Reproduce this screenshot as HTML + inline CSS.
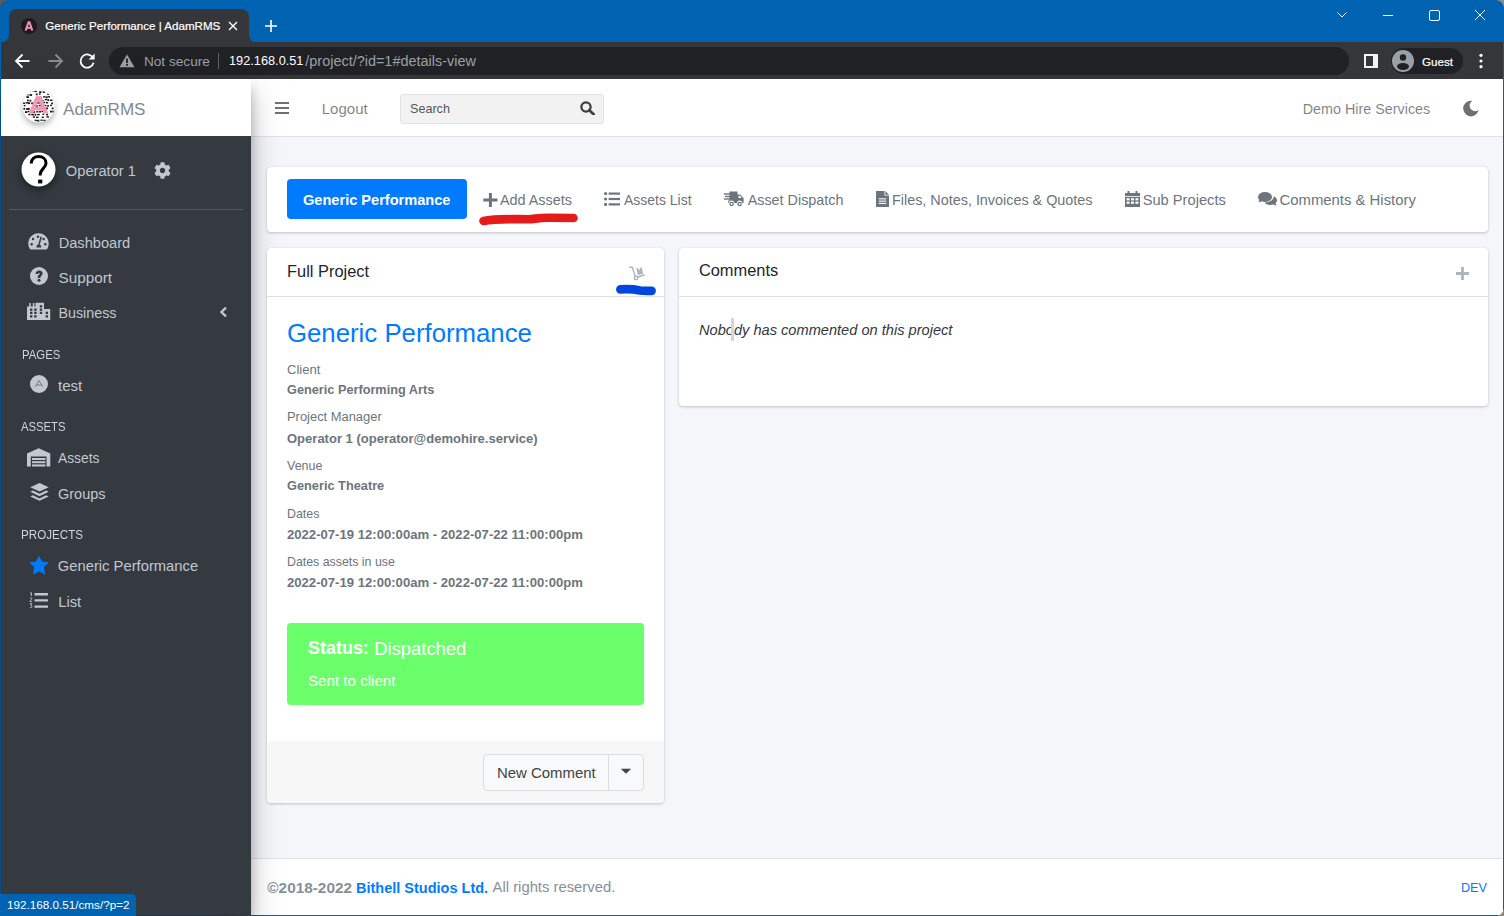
<!DOCTYPE html>
<html><head><meta charset="utf-8">
<style>
*{box-sizing:border-box;margin:0;padding:0}
html,body{width:1504px;height:916px;overflow:hidden;font-family:"Liberation Sans",sans-serif;background:#0063b1}
.a{position:absolute}
.t{position:absolute;white-space:nowrap}
#win{position:absolute;left:0;top:0;width:1504px;height:916px;background:#0063b1;overflow:hidden}
#tab{position:absolute;left:9px;top:9px;width:240px;height:34px;background:#35363a;border-radius:8px 8px 0 0}
#tab:before,#tab:after{content:"";position:absolute;bottom:0;width:8px;height:8px}
#tab:before{left:-8px;background:radial-gradient(circle at 0 0,transparent 7.5px,#35363a 8px)}
#tab:after{right:-8px;background:radial-gradient(circle at 100% 0,transparent 7.5px,#35363a 8px)}
#toolbar{position:absolute;left:1px;top:42px;width:1502px;height:37px;background:#35363a}
#omni{position:absolute;left:109px;top:47px;width:1240px;height:28px;background:#202124;border-radius:14px}
#content{position:absolute;left:1px;top:79px;width:1502px;height:836px;background:#f4f6f9}
#sidebar{position:absolute;left:1px;top:79px;width:250px;height:836px;background:#343a40;box-shadow:0 14px 28px rgba(0,0,0,.25),0 10px 10px rgba(0,0,0,.22)}
#brand{position:absolute;left:1px;top:79px;width:250px;height:57px;background:#fff}
#navbar{position:absolute;left:251px;top:79px;width:1252px;height:58px;background:#fff;border-bottom:1px solid #dee2e6}
#footer{position:absolute;left:251px;top:858px;width:1252px;height:57px;background:#fff;border-top:1px solid #dee2e6}
.card{position:absolute;background:#fff;border-radius:4px;box-shadow:0 0 1px rgba(0,0,0,.125),0 1px 3px rgba(0,0,0,.2)}
</style></head><body>
<div id="win">
<div id="tab"></div>
<svg class="a" style="left:21px;top:18px" width="16" height="16" viewBox="0 0 16 16">
<circle cx="8" cy="8" r="8" fill="#1b1b1d"/><path d="M3.6 12.6L6.8 3.3h2.4l3.2 9.3h-2.3l-.6-1.9H6.5l-.6 1.9z M7 8.9h2L8 5.8z" fill="#f48fb1"/></svg>
<div class="t" style="left:45.3px;top:20.18px;font-size:11.6px;line-height:11.6px;color:#fff;font-weight:normal;font-style:normal;-webkit-text-stroke:0.2px #fff;">Generic Performance | AdamRMS</div>
<svg class="a" style="left:228px;top:21px" width="10" height="10" viewBox="0 0 10 10"><path d="M1 1L9 9M9 1L1 9" stroke="#fff" stroke-width="1.4"/></svg>
<svg class="a" style="left:264px;top:19px" width="14" height="14" viewBox="0 0 14 14"><path d="M7 1V13M1 7H13" stroke="#fff" stroke-width="1.6"/></svg>
<svg class="a" style="left:1330px;top:5px" width="170" height="22" viewBox="0 0 170 22">
<path d="M7.5 7.5L12 12L16.5 7.5" stroke="#fff" stroke-width="1" fill="none"/>
<path d="M53 10.5H63" stroke="#fff" stroke-width="1"/>
<rect x="99.5" y="5.5" width="10" height="10" rx="1.5" stroke="#fff" stroke-width="1" fill="none"/>
<path d="M145 5L155 15M155 5L145 15" stroke="#fff" stroke-width="1"/>
</svg>
<div id="toolbar"></div>
<svg class="a" style="left:12px;top:50px" width="90" height="22" viewBox="0 0 90 22">
<path d="M17.5 11H4.5M10.5 4.5L4 11L10.5 17.5" stroke="#fff" stroke-width="1.8" fill="none"/>
<path d="M36.5 11H49.5M43.5 4.5L50 11L43.5 17.5" stroke="#8a8b8d" stroke-width="1.8" fill="none"/>
<path d="M81.2 8.2A6.6 6.6 0 1 0 81.6 12.8" stroke="#fff" stroke-width="1.8" fill="none"/>
<path d="M82.6 3.6V9.6H76.6Z" fill="#fff"/>
</svg>
<div id="omni"></div>
<svg class="a" style="left:119px;top:54px" width="16" height="14" viewBox="0 0 16 14"><path d="M8 0.5L15.5 13.2H0.5Z" fill="#9aa0a6"/><rect x="7.1" y="4.5" width="1.8" height="4.6" fill="#202124"/><rect x="7.1" y="10" width="1.8" height="1.8" fill="#202124"/></svg>
<div class="t" style="left:143.9px;top:54.65px;font-size:13.65px;line-height:13.65px;color:#9aa0a6;font-weight:normal;font-style:normal;">Not secure</div>
<div class="a" style="left:218px;top:53px;width:1px;height:16px;background:#5f6368"></div>
<div class="t" style="left:229px;top:55.40px;font-size:12.76px;line-height:12.76px;color:#fff;font-weight:normal;font-style:normal;">192.168.0.51</div>
<div class="t" style="left:305.3px;top:53.98px;font-size:14.44px;line-height:14.44px;color:#9aa0a6;font-weight:normal;font-style:normal;">/project/?id=1#details-view</div>
<svg class="a" style="left:1363px;top:53px" width="16" height="16" viewBox="0 0 16 16"><rect x="1" y="1" width="14" height="14" fill="#f1f3f4"/><rect x="3" y="3" width="7" height="10" fill="#35363a"/></svg>
<div class="a" style="left:1391px;top:48px;width:72px;height:26px;border-radius:13px;background:#202124"></div>
<svg class="a" style="left:1392px;top:50px" width="22" height="22" viewBox="0 0 22 22"><circle cx="11" cy="11" r="11" fill="#9aa0a6"/><circle cx="11" cy="7.5" r="3.2" fill="#202124"/><ellipse cx="11" cy="16.5" rx="6" ry="3.4" fill="#202124"/></svg>
<div class="t" style="left:1422px;top:55.58px;font-size:11.6px;line-height:11.6px;color:#fff;font-weight:normal;font-style:normal;-webkit-text-stroke:0.2px #fff;">Guest</div>
<svg class="a" style="left:1478px;top:53px" width="6" height="16" viewBox="0 0 6 16"><circle cx="3" cy="2.3" r="1.6" fill="#fff"/><circle cx="3" cy="8" r="1.6" fill="#fff"/><circle cx="3" cy="13.7" r="1.6" fill="#fff"/></svg>
<div id="content"></div>
<div id="navbar"></div>
<svg class="a" style="left:275px;top:102px" width="14" height="12" viewBox="0 0 14 12"><rect x="0" y="0" width="14" height="2" fill="#707070"/><rect x="0" y="5" width="14" height="2" fill="#707070"/><rect x="0" y="10" width="14" height="2" fill="#707070"/></svg>
<div class="t" style="left:321.7px;top:101.17px;font-size:15.04px;line-height:15.04px;color:rgba(0,0,0,.5);font-weight:normal;font-style:normal;">Logout</div>
<div class="a" style="left:400px;top:94px;width:204px;height:30px;background:#f2f2f2;border:1px solid #e2e2e2;border-radius:3px"></div>
<div class="t" style="left:410px;top:102.63px;font-size:12.6px;line-height:12.6px;color:#555;font-weight:normal;font-style:normal;">Search</div>
<svg class="a" style="left:580px;top:101px" width="15" height="14" viewBox="0 0 15 14"><circle cx="6" cy="6" r="4.6" stroke="#3f3f3f" stroke-width="2.3" fill="none"/><path d="M9.3 9.3L13.6 13.2" stroke="#3f3f3f" stroke-width="2.8" stroke-linecap="round"/></svg>
<div class="t" style="left:1302.7px;top:101.65px;font-size:14.35px;line-height:14.35px;color:rgba(0,0,0,.5);font-weight:normal;font-style:normal;">Demo Hire Services</div>
<svg class="a" style="left:1463px;top:99.5px" width="16" height="17" viewBox="0 0 16 17"><defs><mask id="mm"><rect width="16" height="17" fill="#fff"/><circle cx="12.2" cy="5.6" r="5.6" fill="#000"/></mask></defs><circle cx="8" cy="8.6" r="7.8" fill="#6f6f6f" mask="url(#mm)"/></svg>
<div id="footer"></div>
<div class="t" style="left:267.3px;top:879.81px;font-size:15.35px;line-height:15.35px;color:#869099;font-weight:bold;font-style:normal;">©2018-2022</div>
<div class="t" style="left:356px;top:880.52px;font-size:14.51px;line-height:14.51px;color:#007bff;font-weight:bold;font-style:normal;">Bithell Studios Ltd.</div>
<div class="t" style="left:492.6px;top:880.25px;font-size:14.82px;line-height:14.82px;color:#869099;font-weight:normal;font-style:normal;">All rights reserved.</div>
<div class="t" style="left:1461px;top:882.10px;font-size:12.64px;line-height:12.64px;color:#007bff;font-weight:normal;font-style:normal;">DEV</div>
<div id="sidebar"></div>
<div id="brand"></div>
<svg class="a" style="left:22px;top:90px;filter:drop-shadow(0 3px 3px rgba(0,0,0,.3))" width="33" height="33" viewBox="0 0 33 33"><defs><clipPath id="cc"><circle cx="16.5" cy="16.5" r="16"/></clipPath></defs><circle cx="16.5" cy="16.5" r="16" fill="#fff"/><g clip-path="url(#cc)"><rect x="9.8" y="0.4" width="1.8" height="1.4" fill="#1a1a1a"/><rect x="12.3" y="0.7" width="2.6" height="1.4" fill="#1a1a1a"/><rect x="17.2" y="1.2" width="2.2" height="1.8" fill="#1a1a1a"/><rect x="20.7" y="1.1" width="2.6" height="1.8" fill="#1a1a1a"/><rect x="4.9" y="4.1" width="1.8" height="1.4" fill="#1a1a1a"/><rect x="7.5" y="4.1" width="2.6" height="1.8" fill="#1a1a1a"/><rect x="13.8" y="3.5" width="1.8" height="1.8" fill="#1a1a1a"/><rect x="16.8" y="3.3" width="1.8" height="1.4" fill="#1a1a1a"/><rect x="25.3" y="3.3" width="1.8" height="1.8" fill="#1a1a1a"/><rect x="4.3" y="6.2" width="2.6" height="1.8" fill="#1a1a1a"/><rect x="17.7" y="6.6" width="1.8" height="1.4" fill="#1a1a1a"/><rect x="21.1" y="6.2" width="2.6" height="1.4" fill="#1a1a1a"/><rect x="23.9" y="6.4" width="1.8" height="1.8" fill="#1a1a1a"/><rect x="25.8" y="6.1" width="2.2" height="1.4" fill="#1a1a1a"/><rect x="5.0" y="9.5" width="1.8" height="1.8" fill="#1a1a1a"/><rect x="7.5" y="9.8" width="1.8" height="1.8" fill="#1a1a1a"/><rect x="13.3" y="9.4" width="1.8" height="1.8" fill="#1a1a1a"/><rect x="15.9" y="9.3" width="2.6" height="1.4" fill="#1a1a1a"/><rect x="19.4" y="9.8" width="2.2" height="1.8" fill="#1a1a1a"/><rect x="22.8" y="8.9" width="2.2" height="1.4" fill="#1a1a1a"/><rect x="25.3" y="9.2" width="1.8" height="1.8" fill="#1a1a1a"/><rect x="27.9" y="9.6" width="2.6" height="1.4" fill="#1a1a1a"/><rect x="0.7" y="12.5" width="2.6" height="1.4" fill="#1a1a1a"/><rect x="3.8" y="12.1" width="2.6" height="1.4" fill="#1a1a1a"/><rect x="5.9" y="12.3" width="2.2" height="1.8" fill="#1a1a1a"/><rect x="9.2" y="12.4" width="2.2" height="1.8" fill="#1a1a1a"/><rect x="12.7" y="11.8" width="1.8" height="1.8" fill="#1a1a1a"/><rect x="15.2" y="12.2" width="2.6" height="1.4" fill="#1a1a1a"/><rect x="17.9" y="12.3" width="2.2" height="1.4" fill="#1a1a1a"/><rect x="20.6" y="11.8" width="2.6" height="1.4" fill="#1a1a1a"/><rect x="24.0" y="12.0" width="2.2" height="1.4" fill="#1a1a1a"/><rect x="29.2" y="12.5" width="1.8" height="1.8" fill="#1a1a1a"/><rect x="1.7" y="14.9" width="1.8" height="1.4" fill="#1a1a1a"/><rect x="10.6" y="15.2" width="2.2" height="1.8" fill="#1a1a1a"/><rect x="13.3" y="15.4" width="2.6" height="1.4" fill="#1a1a1a"/><rect x="16.7" y="14.8" width="2.6" height="1.4" fill="#1a1a1a"/><rect x="22.5" y="14.8" width="1.8" height="1.4" fill="#1a1a1a"/><rect x="24.9" y="15.2" width="2.2" height="1.4" fill="#1a1a1a"/><rect x="28.1" y="14.7" width="1.8" height="1.4" fill="#1a1a1a"/><rect x="1.4" y="17.9" width="1.8" height="1.8" fill="#1a1a1a"/><rect x="4.1" y="18.1" width="2.2" height="1.8" fill="#1a1a1a"/><rect x="6.0" y="17.9" width="1.8" height="1.8" fill="#1a1a1a"/><rect x="9.4" y="18.1" width="2.2" height="1.8" fill="#1a1a1a"/><rect x="15.6" y="18.2" width="1.8" height="1.4" fill="#1a1a1a"/><rect x="20.5" y="18.4" width="2.2" height="1.4" fill="#1a1a1a"/><rect x="23.4" y="17.5" width="2.6" height="1.8" fill="#1a1a1a"/><rect x="29.7" y="17.5" width="1.8" height="1.8" fill="#1a1a1a"/><rect x="2.9" y="21.2" width="2.6" height="1.8" fill="#1a1a1a"/><rect x="5.7" y="20.7" width="1.8" height="1.4" fill="#1a1a1a"/><rect x="7.8" y="20.8" width="2.6" height="1.4" fill="#1a1a1a"/><rect x="10.8" y="21.1" width="2.2" height="1.8" fill="#1a1a1a"/><rect x="14.2" y="21.1" width="2.2" height="1.4" fill="#1a1a1a"/><rect x="17.1" y="20.8" width="1.8" height="1.8" fill="#1a1a1a"/><rect x="19.4" y="20.8" width="1.8" height="1.4" fill="#1a1a1a"/><rect x="22.2" y="20.7" width="2.6" height="1.4" fill="#1a1a1a"/><rect x="27.9" y="20.7" width="2.2" height="1.8" fill="#1a1a1a"/><rect x="30.3" y="20.7" width="2.2" height="1.8" fill="#1a1a1a"/><rect x="6.2" y="23.8" width="2.2" height="1.4" fill="#1a1a1a"/><rect x="9.3" y="23.7" width="2.6" height="1.8" fill="#1a1a1a"/><rect x="12.5" y="23.8" width="1.8" height="1.8" fill="#1a1a1a"/><rect x="15.2" y="23.9" width="2.6" height="1.4" fill="#1a1a1a"/><rect x="20.4" y="23.6" width="1.8" height="1.4" fill="#1a1a1a"/><rect x="24.2" y="23.7" width="1.8" height="1.8" fill="#1a1a1a"/><rect x="10.8" y="26.3" width="2.2" height="1.4" fill="#1a1a1a"/><rect x="13.9" y="26.6" width="2.6" height="1.4" fill="#1a1a1a"/><rect x="19.7" y="26.6" width="2.2" height="1.4" fill="#1a1a1a"/><rect x="24.5" y="26.2" width="2.6" height="1.4" fill="#1a1a1a"/><rect x="12.7" y="29.7" width="2.2" height="1.4" fill="#1a1a1a"/><rect x="15.1" y="29.8" width="2.2" height="1.8" fill="#1a1a1a"/><rect x="18.5" y="29.5" width="2.2" height="1.4" fill="#1a1a1a"/><rect x="21.3" y="29.7" width="2.2" height="1.4" fill="#1a1a1a"/></g><path d="M6.6 23.5L13.8 6.3H19.2L26.4 23.5H21.8L20.6 20.4H12.4L11.2 23.5Z M13.9 16.8H19.1L16.5 10.2Z" fill="#f497b4"/></svg>
<div class="t" style="left:63px;top:100.55px;font-size:17.07px;line-height:17.07px;color:#83898f;font-weight:normal;font-style:normal;">AdamRMS</div>
<svg class="a" style="left:21px;top:152px;filter:drop-shadow(0 3px 4px rgba(0,0,0,.5))" width="35" height="35" viewBox="0 0 35 35"><circle cx="17.5" cy="17.5" r="17" fill="#fff"/>
<path d="M10.2 11.6C10.2 7.2 13.3 4.6 17.6 4.6C21.9 4.6 25 7.2 25 11.2C25 16.2 19.2 16.6 19.2 22.6V23.6" stroke="#000" stroke-width="3" fill="none"/><rect x="17.1" y="27.6" width="4.2" height="3.8" fill="#000"/></svg>
<div class="t" style="left:65.8px;top:163.96px;font-size:14.69px;line-height:14.69px;color:#c2c7d0;font-weight:normal;font-style:normal;">Operator 1</div>
<svg class="a" style="left:154px;top:161.5px" width="17" height="17" viewBox="0 0 512 512"><path fill="#c2c7d0" d="M487.4 315.7l-42.6-24.6c4.3-23.2 4.3-47 0-70.2l42.6-24.6c4.9-2.8 7.1-8.6 5.5-14-11.100-35.600-30-67.800-54.700-94.600-3.800-4.100-10-5.100-14.800-2.300L380.800 110c-17.900-15.400-38.500-27.300-60.800-35.100V25.800c0-5.600-3.900-10.500-9.400-11.700-36.700-8.200-74.300-7.800-109.200 0-5.500 1.200-9.400 6.100-9.400 11.700V75c-22.200 7.900-42.800 19.800-60.800 35.100L88.700 85.500c-4.900-2.800-11-1.900-14.800 2.300-24.700 26.700-43.600 58.900-54.700 94.600-1.700 5.400.6 11.200 5.500 14L67.300 221c-4.300 23.200-4.300 47 0 70.200l-42.600 24.600c-4.900 2.800-7.100 8.600-5.500 14 11.100 35.600 30 67.800 54.700 94.600 3.800 4.100 10 5.100 14.800 2.300l42.600-24.600c17.900 15.400 38.500 27.300 60.800 35.100v49.200c0 5.600 3.900 10.500 9.400 11.700 36.700 8.200 74.300 7.800 109.200 0 5.500-1.200 9.400-6.100 9.400-11.700v-49.200c22.200-7.900 42.800-19.800 60.800-35.100l42.600 24.600c4.900 2.800 11 1.900 14.800-2.300 24.700-26.700 43.600-58.900 54.700-94.600 1.500-5.500-.7-11.300-5.600-14.100zM256 336c-44.100 0-80-35.900-80-80s35.900-80 80-80 80 35.900 80 80-35.900 80-80 80z"/></svg>
<div class="a" style="left:9px;top:209px;width:234px;height:1px;background:#4f5962"></div>
<svg class="a" style="left:28px;top:233px" width="21" height="17" viewBox="0 0 21 17">
<path d="M10.5 0.3C4.8 0.3 0.3 4.9 0.3 10.6C0.3 12.5 0.8 14.3 1.7 15.8C1.9 16.2 2.3 16.4 2.7 16.4H18.3C18.7 16.4 19.1 16.2 19.3 15.8C20.2 14.3 20.7 12.5 20.7 10.6C20.7 4.9 16.2 0.3 10.5 0.3Z" fill="#c2c7d0"/>
<circle cx="10" cy="3.7" r="1.2" fill="#343a40"/><circle cx="5" cy="6" r="1.2" fill="#343a40"/><circle cx="15.6" cy="6" r="1.2" fill="#343a40"/>
<circle cx="3.7" cy="11.3" r="1.2" fill="#343a40"/><circle cx="17.3" cy="11.3" r="1.2" fill="#343a40"/>
<path d="M13.2 3.8L11 11.5" stroke="#343a40" stroke-width="1.5"/><path d="M8.3 14.6C8.3 12.7 9.3 11.2 10.8 11.2C12.3 11.2 13.3 12.7 13.3 14.6Z" fill="#343a40"/>
</svg>
<div class="t" style="left:58.7px;top:235.72px;font-size:14.62px;line-height:14.62px;color:#c2c7d0;font-weight:normal;font-style:normal;">Dashboard</div>
<svg class="a" style="left:29.5px;top:267px" width="18" height="18" viewBox="0 0 18 18"><circle cx="9" cy="9" r="9" fill="#c2c7d0"/>
<path d="M5.6 7C5.6 4.9 7.1 3.5 9.1 3.5C11.1 3.5 12.6 4.8 12.6 6.6C12.6 8.7 10.4 9 10.4 10.5V11H7.7V10.2C7.7 7.8 9.9 7.6 9.9 6.7C9.9 6.2 9.6 5.9 9 5.9C8.4 5.9 8.1 6.3 8.1 7Z" fill="#343a40"/><circle cx="9.05" cy="13.3" r="1.5" fill="#343a40"/></svg>
<div class="t" style="left:58.5px;top:269.97px;font-size:15.28px;line-height:15.28px;color:#c2c7d0;font-weight:normal;font-style:normal;">Support</div>
<svg class="a" style="left:27px;top:302px" width="24" height="18" viewBox="0 0 24 18">
<path d="M0 4.5H2.2V1H3.8V4.5H5.8V1H7.4V4.5H8.5V0.8H17V7H23.2V18H0Z" fill="#c2c7d0"/>
<g fill="#343a40"><rect x="3" y="6.5" width="2.4" height="2.3"/><rect x="7.2" y="6.5" width="2.4" height="2.3"/><rect x="12.8" y="3.2" width="2.4" height="2.3"/><rect x="12.8" y="6.5" width="2.4" height="2.3"/>
<rect x="3" y="9.7" width="2.4" height="2.3"/><rect x="7.2" y="9.7" width="2.4" height="2.3"/><rect x="12.8" y="9.7" width="2.4" height="2.3"/><rect x="18.6" y="9.7" width="2.4" height="2.3"/>
<rect x="3" y="13.2" width="2.4" height="2.3"/><rect x="7.2" y="13.2" width="2.4" height="2.3"/><rect x="18.6" y="13.2" width="2.4" height="2.3"/></g></svg>
<div class="t" style="left:58.5px;top:306.20px;font-size:14.29px;line-height:14.29px;color:#c2c7d0;font-weight:normal;font-style:normal;">Business</div>
<svg class="a" style="left:219px;top:306px" width="9" height="12" viewBox="0 0 9 12"><path d="M7 1.5L2.5 6L7 10.5" stroke="#c2c7d0" stroke-width="2.4" fill="none"/></svg>
<div class="t" style="left:21.5px;top:348.58px;font-size:12.9px;line-height:12.9px;color:#d0d4db;font-weight:normal;font-style:normal;transform:scaleX(0.883);transform-origin:0 0;">PAGES</div>
<svg class="a" style="left:29.5px;top:375.3px" width="18" height="18" viewBox="0 0 18 18"><circle cx="9" cy="9" r="9" fill="#c2c7d0"/><path d="M5.2 11.8L9 5.6L12.8 11.8M6.6 10H11.4" stroke="#6c737c" stroke-width="0.9" fill="none"/></svg>
<div class="t" style="left:58px;top:378.29px;font-size:15.02px;line-height:15.02px;color:#c2c7d0;font-weight:normal;font-style:normal;">test</div>
<div class="t" style="left:21px;top:420.68px;font-size:12.9px;line-height:12.9px;color:#d0d4db;font-weight:normal;font-style:normal;transform:scaleX(0.874);transform-origin:0 0;">ASSETS</div>
<svg class="a" style="left:27px;top:448px" width="24" height="19" viewBox="0 0 24 19"><path d="M0 5.5L11.7 0.3L23.3 5.5V18.5H19.5V8.5H3.8V18.5H0Z" fill="#c2c7d0"/>
<rect x="5" y="10" width="13.4" height="2" fill="#c2c7d0"/><rect x="5" y="13.2" width="13.4" height="2" fill="#c2c7d0"/><rect x="5" y="16.4" width="13.4" height="2.1" fill="#c2c7d0"/></svg>
<div class="t" style="left:58px;top:452.32px;font-size:13.8px;line-height:13.8px;color:#c2c7d0;font-weight:normal;font-style:normal;">Assets</div>
<svg class="a" style="left:29.5px;top:483px" width="19" height="18" viewBox="0 0 19 18"><path d="M9.5 0L18.7 4.2L9.5 8.6L0.3 4.2Z" fill="#c2c7d0"/><path d="M2.8 7.6L9.5 10.8L16.2 7.6L18.7 8.8L9.5 13.2L0.3 8.8Z" fill="#c2c7d0"/><path d="M2.8 12.2L9.5 15.4L16.2 12.2L18.7 13.4L9.5 17.8L0.3 13.4Z" fill="#c2c7d0"/></svg>
<div class="t" style="left:58px;top:486.73px;font-size:14.49px;line-height:14.49px;color:#c2c7d0;font-weight:normal;font-style:normal;">Groups</div>
<div class="t" style="left:21.4px;top:529.08px;font-size:12.9px;line-height:12.9px;color:#d0d4db;font-weight:normal;font-style:normal;transform:scaleX(0.902);transform-origin:0 0;">PROJECTS</div>
<svg class="a" style="left:29px;top:555.5px" width="20" height="19" viewBox="0 0 20 19"><path d="M10 0.5L12.7 6.1L18.9 6.8L14.3 11L15.6 17.9L10 14.7L4.4 17.9L5.7 11L1.1 6.8L7.3 6.1Z" fill="#007bff" stroke="#007bff" stroke-width="1" stroke-linejoin="round"/></svg>
<div class="t" style="left:57.8px;top:559.40px;font-size:14.77px;line-height:14.77px;color:#c2c7d0;font-weight:normal;font-style:normal;">Generic Performance</div>
<svg class="a" style="left:29px;top:591.5px" width="20" height="17" viewBox="0 0 20 17">
<path d="M1.3 1.2L2.3 0.5V4" stroke="#c2c7d0" stroke-width="1" fill="none"/>
<path d="M0.9 6.2C1.5 5.5 3 5.7 2.8 6.8C2.6 7.7 0.9 8.6 0.9 9.4H3" stroke="#c2c7d0" stroke-width="0.9" fill="none"/>
<path d="M0.9 11.6H2.8L1.8 13C3.3 13 3.3 15.6 1.8 15.6C1.2 15.6 0.9 15.3 0.8 15" stroke="#c2c7d0" stroke-width="0.9" fill="none"/>
<rect x="5.5" y="1" width="13.5" height="2.4" rx="0.5" fill="#c2c7d0"/><rect x="5.5" y="7.2" width="13.5" height="2.4" rx="0.5" fill="#c2c7d0"/><rect x="5.5" y="13.4" width="13.5" height="2.4" rx="0.5" fill="#c2c7d0"/></svg>
<div class="t" style="left:58.2px;top:594.59px;font-size:14.78px;line-height:14.78px;color:#c2c7d0;font-weight:normal;font-style:normal;">List</div>
<div class="a" style="left:0;top:894px;width:136px;height:22px;background:#0063b1;border-radius:0 4px 0 0"></div>
<div class="t" style="left:7px;top:898.90px;font-size:11.69px;line-height:11.69px;color:#fff;font-weight:normal;font-style:normal;">192.168.0.51/cms/?p=2</div>
<div class="card" style="left:267px;top:167px;width:1221px;height:65px"></div>
<div class="a" style="left:287px;top:179px;width:180px;height:40px;background:#007bff;border-radius:4px"></div>
<div class="t" style="left:303px;top:192.86px;font-size:14.58px;line-height:14.58px;color:#fff;font-weight:bold;font-style:normal;">Generic Performance</div>
<svg class="a" style="left:482.5px;top:192.5px" width="15" height="14" viewBox="0 0 15 14"><path d="M5.9 0H8.9V5.5H14.5V8.5H8.9V14H5.9V8.5H0.3V5.5H5.9Z" fill="#6c757d"/></svg>
<div class="t" style="left:500px;top:193.02px;font-size:14.39px;line-height:14.39px;color:#6c757d;font-weight:normal;font-style:normal;">Add Assets</div>
<svg class="a" style="left:476px;top:206px" width="106" height="24" viewBox="0 0 106 24"><path d="M7.5 15C20 12.5 35 13.2 52 13.2C58 13.2 62 11.8 72 11.8L97.5 12" stroke="#e31b1b" stroke-width="8.6" stroke-linecap="round" stroke-linejoin="round" fill="none"/></svg>
<svg class="a" style="left:604px;top:192px" width="16" height="14" viewBox="0 0 16 14"><g fill="#6c757d"><circle cx="1.6" cy="1.6" r="1.6"/><circle cx="1.6" cy="7" r="1.6"/><circle cx="1.6" cy="12.4" r="1.6"/>
<rect x="4.6" y="0.5" width="11.4" height="2.2"/><rect x="4.6" y="5.9" width="11.4" height="2.2"/><rect x="4.6" y="11.3" width="11.4" height="2.2"/></g></svg>
<div class="t" style="left:624px;top:193.37px;font-size:13.98px;line-height:13.98px;color:#6c757d;font-weight:normal;font-style:normal;">Assets List</div>
<svg class="a" style="left:724px;top:191px" width="20" height="16" viewBox="0 0 20 16"><g fill="#6c757d">
<path d="M5.5 0.5H13.5V3.5H16.3L19.6 7.2V12H18.2A2.6 2.6 0 0 0 13 12H10.2A2.6 2.6 0 0 0 5 12H4.2V9.5H5.5Z"/>
<rect x="0" y="2.3" width="6.5" height="1.4"/><rect x="1" y="4.8" width="6.5" height="1.4"/><rect x="0" y="7.3" width="6.5" height="1.4"/>
<circle cx="7.6" cy="13" r="2.3"/><circle cx="15.6" cy="13" r="2.3"/></g>
<path d="M14.5 4.8H16L17.8 7H14.5Z" fill="#fff"/><circle cx="7.6" cy="13" r="1" fill="#fff"/><circle cx="15.6" cy="13" r="1" fill="#fff"/></svg>
<div class="t" style="left:747.7px;top:193.04px;font-size:14.36px;line-height:14.36px;color:#6c757d;font-weight:normal;font-style:normal;">Asset Dispatch</div>
<svg class="a" style="left:876px;top:191px" width="13" height="16" viewBox="0 0 13 16"><path d="M0 0H8.5V4.5H13V16H0Z" fill="#6c757d"/><path d="M9.3 0L13 3.7H9.3Z" fill="#6c757d"/>
<g fill="#fff"><rect x="2.8" y="7.3" width="7.4" height="1.1"/><rect x="2.8" y="9.6" width="7.4" height="1.1"/><rect x="2.8" y="11.9" width="7.4" height="1.1"/></g></svg>
<div class="t" style="left:892px;top:193.02px;font-size:14.39px;line-height:14.39px;color:#6c757d;font-weight:normal;font-style:normal;">Files, Notes, Invoices &amp; Quotes</div>
<svg class="a" style="left:1125px;top:191px" width="15" height="16" viewBox="0 0 15 16"><g fill="#6c757d"><rect x="2.5" y="0" width="2" height="3"/><rect x="10.5" y="0" width="2" height="3"/>
<path d="M0 2H15V5H0Z"/><path d="M0 5.8H15V16H0Z"/></g>
<g fill="#fff"><rect x="1.6" y="7.2" width="3" height="2.2"/><rect x="6" y="7.2" width="3" height="2.2"/><rect x="10.4" y="7.2" width="3" height="2.2"/>
<rect x="1.6" y="10.6" width="3" height="2.2"/><rect x="6" y="10.6" width="3" height="2.2"/><rect x="10.4" y="10.6" width="3" height="2.2"/></g></svg>
<div class="t" style="left:1142.7px;top:192.79px;font-size:14.66px;line-height:14.66px;color:#6c757d;font-weight:normal;font-style:normal;">Sub Projects</div>
<svg class="a" style="left:1258px;top:192px" width="19" height="14" viewBox="0 0 19 14"><g fill="#6c757d">
<ellipse cx="7" cy="5" rx="7" ry="5"/><path d="M1.5 7.5L0.5 10.5L4.5 9Z"/>
<path d="M15.8 4.2C17.7 5 19 6.5 19 8.2C19 9.4 18.4 10.4 17.5 11.2L18.6 13.8L14.9 12.5C14.1 12.8 13.2 12.9 12.3 12.9C9.6 12.9 7.4 11.7 6.6 10.5C11.5 10.5 15.8 8 15.8 4.2Z"/></g></svg>
<div class="t" style="left:1279.5px;top:192.60px;font-size:14.89px;line-height:14.89px;color:#6c757d;font-weight:normal;font-style:normal;">Comments &amp; History</div>
<div class="card" style="left:267px;top:248px;width:397px;height:555px;overflow:hidden"><div style="position:absolute;left:0;top:493px;width:397px;height:62px;background:#f7f7f7"></div></div>
<div class="a" style="left:267px;top:296px;width:397px;height:1px;background:#dfdfdf"></div>
<div class="t" style="left:287.1px;top:262.82px;font-size:16.4px;line-height:16.4px;color:#212529;font-weight:normal;font-style:normal;">Full Project</div>
<svg class="a" style="left:628px;top:266px" width="18" height="15" viewBox="0 0 18 15"><g fill="none" stroke="#adb5bd" stroke-width="1.4"><path d="M1 1.3H4.3L7.3 10.6"/><path d="M9.2 11.2L16.6 8.8" stroke-width="1.6"/><circle cx="8" cy="12" r="1.7"/></g>
<path d="M8.3 2.6L10.5 2.2L10.9 4.3L12 4.1L11.6 2L13.7 1.6L15.2 7.7L9.9 9Z" fill="#adb5bd"/></svg>
<svg class="a" style="left:612px;top:280px" width="48" height="18" viewBox="0 0 48 18"><path d="M8.4 9.4C14 9 22 9.2 28 10.5C32 11 36 10.8 39.6 10.8" stroke="#0047e0" stroke-width="8.7" stroke-linecap="round" stroke-linejoin="round" fill="none"/></svg>
<div class="t" style="left:287px;top:320.88px;font-size:25.78px;line-height:25.78px;color:#007bff;font-weight:normal;font-style:normal;">Generic Performance</div>
<div class="t" style="left:287px;top:363.04px;font-size:13.06px;line-height:13.06px;color:#6c757d;font-weight:normal;font-style:normal;">Client</div>
<div class="t" style="left:287px;top:384.23px;font-size:12.72px;line-height:12.72px;color:#6c757d;font-weight:bold;font-style:normal;">Generic Performing Arts</div>
<div class="t" style="left:287px;top:411.07px;font-size:12.91px;line-height:12.91px;color:#6c757d;font-weight:normal;font-style:normal;">Project Manager</div>
<div class="t" style="left:287px;top:431.67px;font-size:13.03px;line-height:13.03px;color:#6c757d;font-weight:bold;font-style:normal;">Operator 1 (operator@demohire.service)</div>
<div class="t" style="left:287px;top:459.70px;font-size:12.52px;line-height:12.52px;color:#6c757d;font-weight:normal;font-style:normal;">Venue</div>
<div class="t" style="left:287px;top:480.38px;font-size:12.78px;line-height:12.78px;color:#6c757d;font-weight:bold;font-style:normal;">Generic Theatre</div>
<div class="t" style="left:287px;top:507.70px;font-size:12.4px;line-height:12.4px;color:#6c757d;font-weight:normal;font-style:normal;">Dates</div>
<div class="t" style="left:287px;top:527.89px;font-size:13.12px;line-height:13.12px;color:#6c757d;font-weight:bold;font-style:normal;">2022-07-19 12:00:00am - 2022-07-22 11:00:00pm</div>
<div class="t" style="left:287px;top:555.53px;font-size:12.37px;line-height:12.37px;color:#6c757d;font-weight:normal;font-style:normal;">Dates assets in use</div>
<div class="t" style="left:287px;top:575.79px;font-size:13.12px;line-height:13.12px;color:#6c757d;font-weight:bold;font-style:normal;">2022-07-19 12:00:00am - 2022-07-22 11:00:00pm</div>
<div class="a" style="left:287px;top:623px;width:357px;height:82px;background:#6cff6c;border-radius:4px"></div>
<div class="t" style="left:308px;top:640.49px;font-size:17.97px;line-height:17.97px;color:#fff;font-weight:bold;font-style:normal;">Status:</div>
<div class="t" style="left:374.3px;top:640.13px;font-size:18.39px;line-height:18.39px;color:#fff;font-weight:normal;font-style:normal;">Dispatched</div>
<div class="t" style="left:308px;top:673.48px;font-size:15.14px;line-height:15.14px;color:#fff;font-weight:normal;font-style:normal;">Sent to client</div>
<div class="a" style="left:483px;top:753.5px;width:161px;height:37px;background:#f8f9fa;border:1px solid #ddd;border-radius:4px"></div>
<div class="a" style="left:608px;top:754px;width:1px;height:36px;background:#ddd"></div>
<div class="t" style="left:496.9px;top:765.74px;font-size:14.96px;line-height:14.96px;color:#444;font-weight:normal;font-style:normal;">New Comment</div>
<svg class="a" style="left:620px;top:768px" width="12" height="7" viewBox="0 0 12 7"><path d="M0.8 0.8H11.2L6 5.8Z" fill="#444"/></svg>
<div class="card" style="left:679px;top:248px;width:809px;height:158px"></div>
<div class="a" style="left:679px;top:296px;width:809px;height:1px;background:#dfdfdf"></div>
<div class="t" style="left:698.9px;top:262.00px;font-size:16.42px;line-height:16.42px;color:#212529;font-weight:normal;font-style:normal;">Comments</div>
<svg class="a" style="left:1456px;top:267px" width="13" height="13" viewBox="0 0 13 13"><path d="M5.1 0H7.9V5.1H13V7.9H7.9V13H5.1V7.9H0V5.1H5.1Z" fill="#adb5bd"/></svg>
<div class="t" style="left:699px;top:322.83px;font-size:14.61px;line-height:14.61px;color:#33383d;font-weight:normal;font-style:italic;">Nobody has commented on this project</div>
<div class="a" style="left:730.5px;top:317.5px;width:3.5px;height:23px;background:#d3d7dc"></div>
<div class="a" style="left:0;top:0;width:8px;height:8px;background:radial-gradient(circle at 8px 8px,transparent 7.5px,#5a5a5a 8px)"></div>
<div class="a" style="left:1496px;top:0;width:8px;height:8px;background:radial-gradient(circle at 0 8px,transparent 7.5px,#8a8a8a 8px)"></div>
<div class="a" style="left:1496px;top:908px;width:8px;height:8px;background:radial-gradient(circle at 0 0,transparent 7.5px,#8a8a8a 8px)"></div>
</div>
</body></html>
